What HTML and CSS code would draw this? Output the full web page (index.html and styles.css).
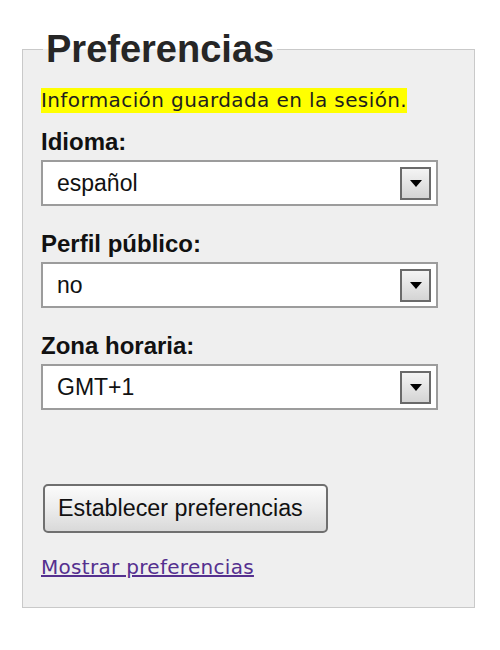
FILE: index.html
```html
<!DOCTYPE html>
<html lang="es">
<head>
<meta charset="utf-8">
<title>Preferencias</title>
<link rel="stylesheet" href="styles.css">
</head>
<body>
<form class="prefs">
  <fieldset class="box">
    <legend class="box-title">Preferencias</legend>
    <p class="note"><span class="note-text">Información guardada en la sesión.</span></p>
    <div class="field">
      <label class="field-label">Idioma:</label>
      <div class="select"><span class="select-value">español</span><span class="select-arrow"><svg width="12" height="7" viewBox="0 0 12 7"><path d="M0 0H12L6 7Z" fill="#000"/></svg></span></div>
    </div>
    <div class="field">
      <label class="field-label">Perfil público:</label>
      <div class="select"><span class="select-value">no</span><span class="select-arrow"><svg width="12" height="7" viewBox="0 0 12 7"><path d="M0 0H12L6 7Z" fill="#000"/></svg></span></div>
    </div>
    <div class="field">
      <label class="field-label">Zona horaria:</label>
      <div class="select"><span class="select-value">GMT+1</span><span class="select-arrow"><svg width="12" height="7" viewBox="0 0 12 7"><path d="M0 0H12L6 7Z" fill="#000"/></svg></span></div>
    </div>
    <button type="button" class="btn">Establecer preferencias</button>
    <p class="link-row"><a class="link" href="#">Mostrar preferencias</a></p>
  </fieldset>
</form>
</body>
</html>
```

FILE: styles.css
```css
html, body {
  margin: 0;
  padding: 0;
  background: #ffffff;
}
.prefs {
  padding-top: 28px;
  padding-left: 22px;
}
.box {
  box-sizing: border-box;
  width: 453px;
  margin: 0;
  border: 1px solid #c9c9c9;
  background: #efefef;
  padding: 17px 36px 28px 18px;
  min-width: 0;
}
.box-title {
  font-family: "Liberation Sans", Arial, sans-serif;
  font-weight: bold;
  font-size: 38px;
  color: #262626;
  padding: 0 3px;
  margin-left: 2px;
}
.note {
  margin: 0 0 16px 0;
}
.note-text {
  display: inline-block;
  font-family: "DejaVu Sans", Verdana, sans-serif;
  font-size: 20px;
  letter-spacing: 0.4px;
  line-height: 25px;
  background: #ffff00;
  color: #1e1e1e;
}
.field {
  display: flex;
  flex-direction: column;
  margin-bottom: 25px;
}
.field-label {
  font-family: "Liberation Sans", Arial, sans-serif;
  font-weight: bold;
  font-size: 24px;
  line-height: 26px;
  color: #111111;
  margin-bottom: 5px;
}
.select {
  box-sizing: border-box;
  height: 46px;
  border: 2px solid #9c9c9c;
  background: #ffffff;
  display: flex;
  align-items: center;
  justify-content: space-between;
  padding: 0 5px 0 14px;
}
.select-value {
  font-family: "Liberation Sans", Arial, sans-serif;
  font-size: 23px;
  color: #111111;
}
.select-arrow {
  box-sizing: border-box;
  width: 31px;
  height: 33px;
  border: 2px solid #6a6a6a;
  background: linear-gradient(#f4f4f4, #d4d4d4);
  display: flex;
  align-items: center;
  justify-content: center;
}
.btn {
  box-sizing: border-box;
  display: block;
  width: 285px;
  height: 49px;
  margin: 74px 0 0 2px;
  border: 2px solid #6f6f6f;
  border-radius: 5px;
  background: linear-gradient(#fbfbfb 0%, #ececec 50%, #d9d9d9 100%);
  font-family: "Liberation Sans", Arial, sans-serif;
  font-size: 23.3px;
  color: #111111;
  text-align: left;
  padding: 0 0 0 13px;
}
.link-row {
  margin: 22px 0 0 0;
}
.link {
  font-family: "DejaVu Sans", Verdana, sans-serif;
  font-size: 20px;
  letter-spacing: 0.3px;
  color: #55308f;
  text-decoration: underline;
}
```
